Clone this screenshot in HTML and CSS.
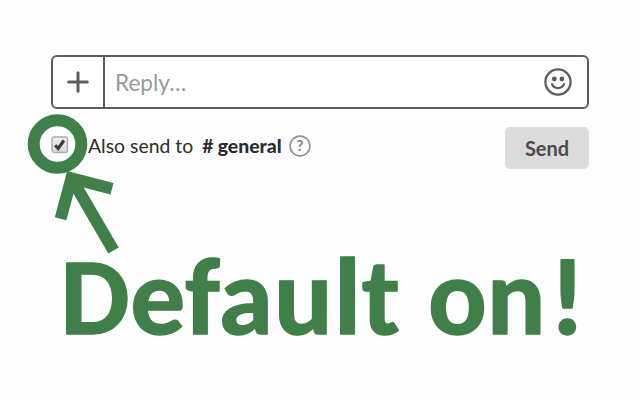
FILE: index.html
```
<!DOCTYPE html>
<html lang="en">
<head>
<meta charset="utf-8">
<title>Reply</title>
<link rel="stylesheet" href="styles.css">
</head>
<body>
<main class="page">
  <div class="composer">
    <div class="attach"><svg width="22" height="22" viewBox="0 0 22 22"><path d="M11 1.7v18.6M1.7 11h18.6"/></svg></div>
    <div class="placeholder">Reply…</div>
    <svg class="emoji" width="28" height="28" viewBox="0 0 28 28"><circle class="line" cx="14" cy="14" r="12.6"/><circle cx="10.3" cy="11" r="2.4"/><circle cx="17.9" cy="11" r="2.4"/><path class="line" d="M8 16.2C10 21.3 18 21.3 20 16.2"/></svg>
  </div>
  <div class="options">
    <svg class="check" width="18" height="18" viewBox="0 0 18 18">
      <defs><linearGradient id="box" x1="0" y1="0" x2="0" y2="1"><stop offset="0" stop-color="#eee"/><stop offset="1" stop-color="#d8d8d8"/></linearGradient></defs>
      <rect x="1" y="1" width="15.5" height="15.5" rx="2" fill="url(#box)" stroke="#aaa" stroke-width="1.3"/>
      <path d="M4.2 9.2l3 3.3 5.7-8" fill="none" stroke="#3c3c3c" stroke-width="3.1"/>
    </svg>
    <span class="label">Also send to</span>
    <span class="channel"># <b>general</b></span>
    <svg class="help" width="22" height="22" viewBox="0 0 22 22"><circle cx="11" cy="11" r="9.9"/><text x="11" y="16.2">?</text></svg>
    <button class="send">Send</button>
  </div>
  <svg class="annotation" width="640" height="400" viewBox="0 0 640 400">
    <circle cx="57.5" cy="144" r="23.8"/>
    <path d="M113.5 250.5L71.4 178.3M60.6 218.8L71.4 178.3L112 188.8"/>
    <text class="callout" x="60.5" dx="0 0.8 0.6 0.5 1.2 1.2 1.2 1.2 2 0 4" y="333.5">Default on!</text>
  </svg>
</main>
</body>
</html>
```
FILE: styles.css
```
body {
  margin: 0;
  background: #fefefe;
  font-family: Lato, "Liberation Sans", sans-serif;
}
.page {
  position: relative;
  box-sizing: border-box;
  width: 640px;
  height: 400px;
  padding: 55px 51px 0;
  overflow: hidden;
}
.composer {
  display: flex;
  align-items: center;
  box-sizing: border-box;
  height: 54px;
  border: 2px solid #5d5d5f;
  border-radius: 6px;
  background: #fff;
}
.attach {
  display: grid;
  place-items: center;
  box-sizing: border-box;
  width: 52px;
  height: 100%;
  border-right: 2px solid #5d5d5f;
}
.attach path {
  stroke: #5d5d5f;
  stroke-width: 3;
  stroke-linecap: round;
}
.placeholder {
  flex: 1;
  padding-left: 10px;
  color: #9a9a9a;
  font-size: 22.6px;
}
.emoji {
  margin-right: 15px;
  fill: #5d5d5f;
}
.emoji .line {
  fill: none;
  stroke: #5d5d5f;
  stroke-width: 2.3;
  stroke-linecap: round;
}
.options {
  display: flex;
  align-items: center;
  height: 42px;
  margin-top: 18px;
  color: #2c2d30;
  font-size: 19.4px;
}
.check {
  margin: -6px 19px 0 0;
}
.label,
.channel {
  margin-top: -5px;
}
.channel {
  margin-left: 9px;
  font-weight: 700;
  word-spacing: -0.5px;
}
.help {
  margin: -4px 0 0 7.5px;
}
.help circle {
  fill: none;
  stroke: #919191;
  stroke-width: 1.6;
}
.help text {
  fill: #858585;
  font-size: 15px;
  font-weight: 700;
  text-anchor: middle;
}
.send {
  width: 84px;
  height: 42px;
  margin-left: auto;
  padding: 0 0 1px;
  border: 0;
  border-radius: 5px;
  background: #dcdcdc;
  color: #4b4b4d;
  font: 700 20px Lato, sans-serif;
}
.annotation {
  position: absolute;
  inset: 0;
}
.annotation circle,
.annotation path {
  fill: none;
  stroke: #417f48;
  stroke-width: 12;
}
.callout {
  fill: #417f48;
  stroke: #417f48;
  stroke-width: 1.4;
  stroke-linejoin: round;
  font: 700 109.5px Carlito, Lato, sans-serif;
}
```
